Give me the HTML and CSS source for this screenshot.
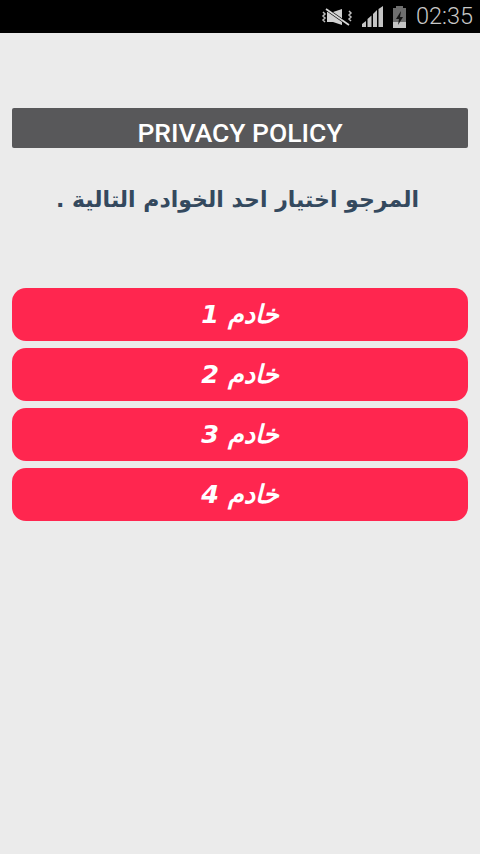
FILE: index.html
```html
<!DOCTYPE html>
<html lang="ar">
<head>
    <meta charset="UTF-8">
    <meta name="viewport" content="width=device-width, initial-scale=1.0">
    <title>Privacy Policy</title>
    <link rel="stylesheet" href="styles.css">
</head>
<body>
    <div class="status-bar">
        <!-- mute -->
        <svg class="icon-mute" width="32" height="18" viewBox="0 0 32 18">
            <path d="M6 4h6l9-3v16l-9-3H6z" fill="#d0d0d0"/>
            <path d="M5 1l23 16" stroke="#000" stroke-width="3"/>
            <path d="M5 1l23 16" stroke="#d8d8d8" stroke-width="1.800"/>
            <path d="M2 4l2 2-2 2 2 2-2 2 2 2M28 3l2 2-2 2 2 2-2 2 2 2" fill="none" stroke="#bdbdbd" stroke-width="1.500"/>
        </svg>
        <!-- signal -->
        <svg class="icon-signal" width="22" height="22" viewBox="0 0 22 22">
            <path d="M0 21v-3l4-3v6zM5.500 21v-8l4-3.500V21zM11 21V8l4-4v17zM16.500 21V3L21 0v21z" fill="#c4c4c4"/>
        </svg>
        <!-- battery -->
        <svg class="icon-battery" width="15" height="22" viewBox="0 0 15 22">
            <path d="M4 0h7v2h3v20H1V2h3z" fill="#6e6e6e"/>
            <path d="M1 16h13v6H1z" fill="#c4c4c4"/>
            <path d="M9 5l-5 8h3l-1 6 5-8H8z" fill="#141414"/>
        </svg>
        <span class="clock">02:35</span>
    </div>

    <div class="content">
        <div class="policy-bar">PRIVACY POLICY</div>
        <p class="intro" dir="rtl">المرجو اختيار احد الخوادم التالية .</p>

        <div class="server-list">
            <a class="server-btn" dir="rtl">خادم 1</a>
            <a class="server-btn" dir="rtl">خادم 2</a>
            <a class="server-btn" dir="rtl">خادم 3</a>
            <a class="server-btn" dir="rtl">خادم 4</a>
        </div>
    </div>
</body>
</html>
```

FILE: styles.css
```css
* {
    margin: 0;
    padding: 0;
    box-sizing: border-box;
}

body {
    font-family: Roboto, 'DejaVu Sans', sans-serif;
    background: #ebebeb;
    min-height: 100vh;
}

.status-bar {
    height: 33px;
    background: #000;
    display: flex;
    align-items: center;
    justify-content: flex-end;
    padding-right: 7px;
}

.icon-mute {
    margin-right: 9px;
}

.icon-signal {
    margin-right: 8px;
}

.icon-battery {
    margin-right: 9px;
}

.clock {
    color: #c8c8c8;
    font-size: 23.500px;
    font-weight: 300;
    line-height: 1;
}

.content {
    padding: 75px 12px 0;
}

.policy-bar {
    height: 40px;
    background: #58585a;
    border-radius: 2px;
    color: #fff;
    font-size: 26.500px;
    font-weight: 500;
    line-height: 50px;
    text-align: center;
    overflow: hidden;
}

.intro {
    margin-top: 36px;
    padding-right: 5px;
    font-family: 'DejaVu Sans', sans-serif;
    font-size: 22px;
    font-weight: 700;
    line-height: 32px;
    color: #34495e;
    text-align: center;
}

.server-list {
    margin-top: 72px;
    display: flex;
    flex-direction: column;
    gap: 7px;
}

.server-btn {
    display: block;
    height: 53px;
    background: #ff264f;
    border-radius: 14px;
    color: #fff;
    font-family: 'DejaVu Sans', sans-serif;
    font-size: 25.500px;
    font-weight: 700;
    font-style: italic;
    line-height: 53px;
    text-align: center;
}
```
